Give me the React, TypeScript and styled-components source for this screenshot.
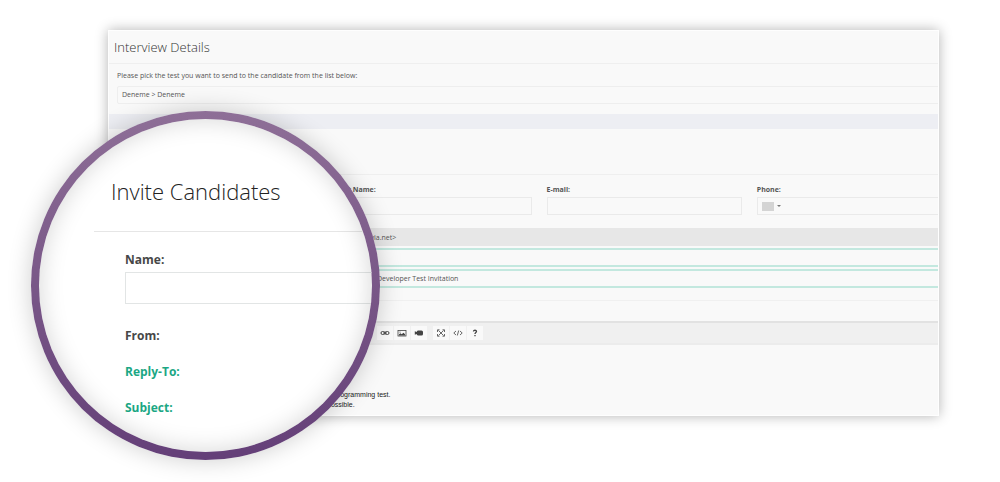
import React from 'react';
import styled, { createGlobalStyle } from 'styled-components';

const GlobalStyle = createGlobalStyle`
  * { box-sizing: border-box; }
  body {
    margin: 0;
    background: #fff;
    color: #555;
    font-family: 'Open Sans', 'Noto Sans', sans-serif;
  }
  h1, h2, p { margin: 0; }
  input, select, button { font: inherit; color: inherit; }
`;

const Scene = styled.main`
  position: relative;
  padding: 30px 61px 66px 108px;
`;

const Panel = styled.form`
  display: flex;
  flex-direction: column;
  overflow: hidden;
  border: 1px solid #fefefe;
  background: #f9f9f9;
  box-shadow: 0 0 12px rgba(0, 0, 0, 0.3);
  font-size: 7px;
  line-height: 10px;
`;

const PanelTitle = styled.h1`
  height: 33px;
  padding: 7px 5px 0;
  border-bottom: 1px solid #efefef;
  color: #333;
  font-size: 13px;
  font-weight: 300;
  line-height: 18px;
`;

const TestPicker = styled.div`
  display: flex;
  flex-direction: column;
  gap: 5px;
  padding: 7px 0 10px 8px;
`;

const TestSelect = styled.select`
  height: 18px;
  margin-right: -2px;
  padding: 0 4px;
  appearance: none;
  border: 1px solid #eee;
  border-radius: 2px;
  background: transparent;
`;

const Band = styled.div`
  height: 15px;
  background: #edeef3;
`;

const FieldGrid = styled.div`
  display: grid;
  grid-template-columns: repeat(4, 1fr);
  gap: 15px;
  margin: 45px -14px 0 0;
  padding: 10px 0 13px 17px;
  border-top: 1px solid #efefef;
`;

const Field = styled.div`
  display: flex;
  flex-direction: column;
  justify-content: flex-end;
  gap: 2px;
`;

const FieldLabel = styled.label`
  font-weight: 700;
`;

const FieldBox = styled.div`
  display: flex;
  align-items: center;
  height: 18px;
  border: 1px solid #eaeaea;
`;

const FieldInput = styled.input`
  flex: 1;
  min-width: 0;
  height: 16px;
  padding: 0 4px;
  border: 0;
  background: transparent;
`;

const CountryButton = styled.button`
  display: flex;
  align-items: center;
  gap: 3px;
  padding: 0 4px;
  border: 0;
  background: transparent;
`;

const Flag = styled.span`
  width: 12px;
  height: 9px;
  background: #d4d4d4;
`;

const Caret = styled.span`
  border: 2px solid transparent;
  border-top-color: #777;
  border-bottom-width: 0;
`;

const Headers = styled.div`
  display: flex;
  flex-direction: column;
  gap: 2px;
  margin-right: -2px;
  padding-bottom: 12px;
  border-bottom: 1px solid #f0f0f0;
`;

const HeaderInput = styled.input<{ $sender?: boolean }>`
  width: 100%;
  height: ${(p) => (p.$sender ? 18 : 19)}px;
  padding: 0 4px 0 ${(p) => (p.$sender ? 237 : 266)}px;
  border: ${(p) => (p.$sender ? '0' : '2px solid #c3e8df')};
  background: ${(p) => (p.$sender ? '#e7e7e7' : 'transparent')};
`;

const Toolbar = styled.div`
  display: flex;
  align-items: center;
  gap: 6px;
  height: 24px;
  margin-top: 20px;
  padding-left: 268px;
  border-top: 2px solid #e2e2e2;
  border-bottom: 2px solid #ececec;
  background: #f0f0f0;
`;

const ToolGroup = styled.div`
  display: flex;
  gap: 1px;
`;

const ToolButton = styled.button`
  display: flex;
  align-items: center;
  justify-content: center;
  width: 16px;
  height: 14px;
  padding: 0;
  border: 0;
  background: #f9f9f9;
  color: #444;
`;

const Message = styled.div`
  height: 70px;
  padding: 45px 0 0 213px;
  color: #222;
  font-family: 'Liberation Sans', Arial, sans-serif;
`;

const MessageLine = styled.p<{ $indent: number }>`
  padding-left: ${(p) => p.$indent}px;
`;

const Lens = styled.section`
  position: absolute;
  top: 111px;
  left: 31px;
  width: 349px;
  height: 349px;
  overflow: hidden;
  padding: 56px 0 0 55px;
  border: 8px solid transparent;
  border-radius: 50%;
  background:
    linear-gradient(#fff, #fff) padding-box,
    linear-gradient(#8e6f97, #643f78) border-box;
  box-shadow: 0 0 24px rgba(0, 0, 0, 0.2);
  font-size: 12px;
  font-weight: 700;
  line-height: 16px;

  &::after {
    content: '';
    position: absolute;
    inset: 0;
    border-radius: 50%;
    box-shadow: inset 0 0 24px rgba(0, 0, 0, 0.17);
    pointer-events: none;
  }
`;

const LensTitle = styled.h2`
  padding: 0 0 24px 17px;
  border-bottom: 1px solid #e6e6e6;
  color: #222;
  font-size: 22px;
  font-weight: 300;
  line-height: 32px;
`;

const LensFields = styled.div`
  display: flex;
  flex-direction: column;
  gap: 20px;
  padding: 20px 0 0 31px;
`;

const LensField = styled.div`
  display: flex;
  flex-direction: column;
  gap: 4px;
  margin-bottom: 4px;
`;

const LensLabel = styled.label<{ $accent?: boolean }>`
  color: ${(p) => (p.$accent ? '#1ba784' : '#474747')};
`;

const LensInput = styled.input`
  height: 32px;
  margin-right: -2px;
  padding: 0 8px;
  border: 1px solid #e2e5e5;
  background: transparent;
  font-weight: 400;
`;

const Glyph = ({ children }: { children: React.ReactNode }) => (
  <svg width="10" height="8" viewBox="0 0 10 8" fill="none" stroke="currentColor" aria-hidden="true">
    {children}
  </svg>
);

const insertTools = [
  {
    name: 'Link',
    glyph: (
      <>
        <rect x="1" y="2.5" width="4" height="3" rx="1.5" />
        <rect x="5" y="2.5" width="4" height="3" rx="1.5" />
        <path d="M3 4h4" />
      </>
    ),
  },
  {
    name: 'Image',
    glyph: (
      <>
        <rect x="1" y="1.5" width="8" height="5.5" strokeWidth="0.8" />
        <path d="M2 6.5V5.300l1.500-1 1.200 1L6.500 3.800 8 5.300v1.200z" fill="currentColor" stroke="none" />
        <circle cx="3" cy="3" r="0.6" fill="currentColor" stroke="none" />
      </>
    ),
  },
  {
    name: 'Video',
    glyph: (
      <path
        d="M4 1.500h3.500a1.500 1.500 0 0 1 1.500 1.500v2A1.500 1.500 0 0 1 7.500 6.500H4A1.500 1.500 0 0 1 2.700 5L.800 5.800V2.200L2.700 3A1.500 1.500 0 0 1 4 1.500z"
        fill="currentColor"
        stroke="none"
      />
    ),
  },
];

const viewTools = [
  {
    name: 'Full screen',
    glyph: (
      <>
        <path d="M2.500 1.500l5 5M7.500 1.500l-5 5" strokeWidth="0.8" />
        <path d="M1.500 3V.800h2M6.500.800h2V3M8.500 5v2.200h-2M3.500 7.200h-2V5" strokeWidth="0.8" />
      </>
    ),
  },
  {
    name: 'Code view',
    glyph: <path d="M3 2L.800 4 3 6M7 2l2.200 2L7 6M5.700 1.500L4.300 6.500" strokeWidth="0.8" />,
  },
  {
    name: 'Help',
    glyph: <path d="M3.500 2.500C3.500.800 6.500.800 6.500 2.500 6.500 3.700 5 3.500 5 5M5 6v1.200" strokeWidth="1.300" />,
  },
];

const Tools = ({ items }: { items: typeof insertTools }) => (
  <ToolGroup>
    {items.map((tool) => (
      <ToolButton key={tool.name} type="button" aria-label={tool.name}>
        <Glyph>{tool.glyph}</Glyph>
      </ToolButton>
    ))}
  </ToolGroup>
);

const textFields = [
  { id: 'last-name', label: 'Last Name:' },
  { id: 'email', label: 'E-mail:' },
];

export default function App() {
  return (
    <>
      <GlobalStyle />
      <Scene>
        <Panel>
          <PanelTitle>Interview Details</PanelTitle>
          <TestPicker>
            <label htmlFor="test">
              Please pick the test you want to send to the candidate from the list below:
            </label>
            <TestSelect id="test">
              <option>Deneme &gt; Deneme</option>
            </TestSelect>
          </TestPicker>
          <Band />
          <FieldGrid>
            <Field>
              <FieldBox>
                <FieldInput aria-label="First name" />
              </FieldBox>
            </Field>
            {textFields.map((field) => (
              <Field key={field.id}>
                <FieldLabel htmlFor={field.id}>{field.label}</FieldLabel>
                <FieldBox>
                  <FieldInput id={field.id} />
                </FieldBox>
              </Field>
            ))}
            <Field>
              <FieldLabel htmlFor="phone">Phone:</FieldLabel>
              <FieldBox>
                <CountryButton type="button" aria-label="Country code">
                  <Flag />
                  <Caret />
                </CountryButton>
                <FieldInput id="phone" type="tel" />
              </FieldBox>
            </Field>
          </FieldGrid>
          <Headers>
            <HeaderInput $sender id="from" readOnly defaultValue="<hr@trivia.net>" />
            <HeaderInput id="reply-to" />
            <HeaderInput id="subject" defaultValue="Developer Test Invitation" />
          </Headers>
          <Toolbar>
            <Tools items={insertTools} />
            <Tools items={viewTools} />
          </Toolbar>
          <Message>
            <MessageLine $indent={12}>programming test.</MessageLine>
            <MessageLine $indent={5}>possible.</MessageLine>
          </Message>
        </Panel>
        <Lens>
          <LensTitle>Invite Candidates</LensTitle>
          <LensFields>
            <LensField>
              <LensLabel htmlFor="name">Name:</LensLabel>
              <LensInput id="name" />
            </LensField>
            <LensLabel htmlFor="from">From:</LensLabel>
            <LensLabel $accent htmlFor="reply-to">Reply-To:</LensLabel>
            <LensLabel $accent htmlFor="subject">Subject:</LensLabel>
          </LensFields>
        </Lens>
      </Scene>
    </>
  );
}
